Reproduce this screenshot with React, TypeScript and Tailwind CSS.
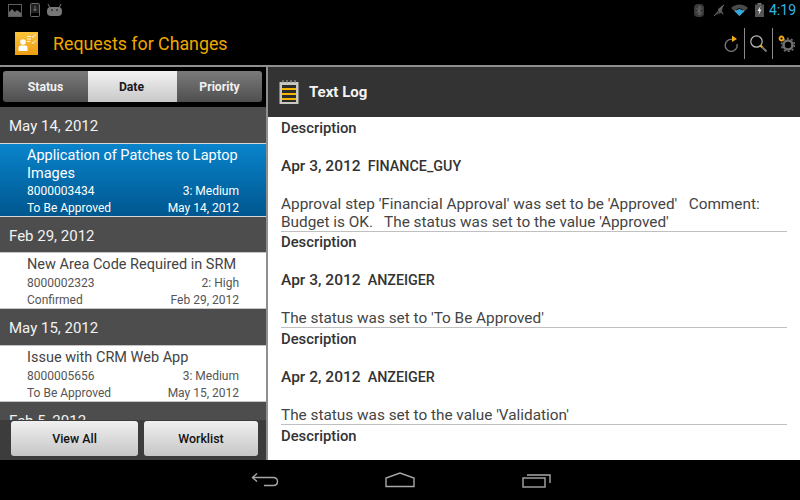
import { ReactNode } from 'react';

const FONT = "font-['Roboto',sans-serif]";

function StatusBar() {
  return (
    <div className="h-[22px] bg-black flex items-center justify-between pl-2 pr-[4px] pb-[2px] shrink-0">
      <div className="flex items-center text-[#555]">
        <svg width="14" height="13" viewBox="0 0 14 13">
          <rect x="0.5" y="0.5" width="13" height="12" fill="none" stroke="#5c5c5c" />
          <path d="M1 11 L1 8 L4 5 L7 8 L9 6 L13 9 L13 12 L1 12 Z" fill="#6a6a6a" />
        </svg>
        <svg width="10" height="14" viewBox="0 0 10 14" className="ml-[8px]">
          <rect x="0.5" y="0.5" width="9" height="13" rx="1" fill="none" stroke="#6a6a6a" />
          <rect x="1" y="1" width="8" height="9" fill="#222" />
          <path d="M5 3 V7 M3.6 6 L5 8 L6.4 6" stroke="#888" strokeWidth="0.8" fill="none" />
        </svg>
        <svg width="15" height="12" viewBox="0 0 15 12" className="ml-[7px]">
          <rect x="0" y="3" width="15" height="9" rx="4" fill="#777" />
          <path d="M3 4 L1 0 M12 4 L14 0" stroke="#777" strokeWidth="1" />
          <circle cx="5" cy="6" r="0.8" fill="#000" />
          <circle cx="10" cy="6" r="0.8" fill="#000" />
        </svg>
      </div>
      <div className="flex items-center">
        <svg width="10" height="13" viewBox="0 0 10 13" className="mr-[9px]">
          <rect x="0" y="0" width="10" height="13" rx="4" fill="#3a3a3a" />
          <path d="M2.5 4 L7.5 9 L5 11 V2 L7.5 4 L2.5 9" fill="none" stroke="#777" strokeWidth="0.8" />
        </svg>
        <svg width="12" height="13" viewBox="0 0 12 13" className="mr-[6px]">
          <path d="M2 11 L6 8 L5 5 L10 1 L9 7 L11 11 L8 9 Z" fill="#555" />
          <path d="M1 12 L11 1" stroke="#777" strokeWidth="1" />
        </svg>
        <svg width="17" height="12" viewBox="0 0 17 12" className="mr-[7px]">
          <path d="M0 4 A12 12 0 0 1 17 4 L8.5 12 Z" fill="#4a4a4a" />
          <path d="M3.5 7 A7 7 0 0 1 13.5 7 L8.5 12 Z" fill="#33a9dc" />
          <path d="M5 6 A5.5 5.5 0 0 1 12 6" stroke="#000" strokeWidth="0.8" fill="none" />
        </svg>
        <svg width="9" height="14" viewBox="0 0 9 14" className="mr-[5px]">
          <rect x="2.5" y="0" width="4" height="2" fill="#777" />
          <rect x="0" y="1.5" width="9" height="12.5" fill="#555" />
          <path d="M5.5 3 L2.5 8 H4.3 L3.5 12 L6.5 6.5 H4.7 Z" fill="#eee" />
        </svg>
        <span className={`text-[14px] leading-none text-[#33b5e5] ${FONT}`}>4:19</span>
      </div>
    </div>
  );
}

function ActionBar() {
  return (
    <div className="h-[43px] bg-black flex items-center pl-[15px] shrink-0">
      <svg width="23" height="23" viewBox="0 0 23 23">
        <defs>
          <linearGradient id="logo" x1="0" y1="0" x2="0" y2="1">
            <stop offset="0" stopColor="#fcc43c" />
            <stop offset="1" stopColor="#ee9c10" />
          </linearGradient>
        </defs>
        <rect width="23" height="23" fill="url(#logo)" />
        <circle cx="8" cy="10" r="2.8" fill="#fff" />
        <path d="M3.5 19 V15.5 Q3.5 13.5 6 13.5 H10 Q12.5 13.5 12.5 15.5 V19 Z" fill="#fff" />
        <path d="M12 4.5 H16 M12 7 H16 M12 9.5 H15" stroke="#fff" strokeWidth="0.9" />
        <path d="M17 4 L18 5.5 L20.5 2.5 M17 10 L18 11.5 L20.5 8.5" stroke="#fff" strokeWidth="0.9" fill="none" />
      </svg>
      <span className={`ml-[15px] pt-[1px] text-[17.8px] leading-none text-[#f0a800] ${FONT}`}>Requests for Changes</span>
      <div className="ml-auto flex items-center">
        <svg width="16" height="18" viewBox="0 0 16 18" className="mr-[5px]">
          <path d="M9.5 4.5 A6 6 0 1 0 14 9" fill="none" stroke="#777" strokeWidth="1.4" />
          <path d="M9 0.5 L14 4 L9 7 Z" fill="#f5ab14" />
        </svg>
        <div className="w-[1px] h-[31px] bg-[#8a8a8a]" />
        <svg width="19" height="19" viewBox="0 0 19 19" className="mx-[4px]">
          <circle cx="7.5" cy="7.5" r="5.7" fill="none" stroke="#bbb" strokeWidth="1.2" />
          <path d="M11.5 11.5 L13.5 13.5" stroke="#f5ab14" strokeWidth="2.2" />
          <path d="M13.5 13.5 L17.5 17.5" stroke="#777" strokeWidth="2.2" />
        </svg>
        <div className="w-[1px] h-[31px] bg-[#8a8a8a]" />
        <svg width="17" height="17" viewBox="0 0 17 17" className="mx-[5px]">
          <circle cx="10" cy="10" r="4.5" fill="none" stroke="#6f6f6f" strokeWidth="2.6" />
          <circle cx="10" cy="10" r="6.5" fill="none" stroke="#6f6f6f" strokeWidth="1.6" strokeDasharray="2 2.1" />
          <circle cx="3.5" cy="3.5" r="2" fill="none" stroke="#f5ab14" strokeWidth="1.8" />
        </svg>
      </div>
    </div>
  );
}

function Tab({ label, active, width }: { label: string; active?: boolean; width: string }) {
  return (
    <div
      className={`${width} flex items-center justify-center pt-[2px] text-[12.2px] font-bold ${
        active
          ? 'bg-linear-to-b from-[#f2f2f2] to-[#c9c9c9] text-[#1a1a1a] pr-[2px]'
          : 'bg-linear-to-b from-[#7b7b7b] to-[#4f4f4f] text-[#f0f0f0]'
      }`}
    >
      {label}
    </div>
  );
}

function DateHeader({ children, tall }: { children: ReactNode; tall?: boolean }) {
  return (
    <div className={`${tall ? 'h-[36px] pt-[2px]' : 'h-[35px] pt-[3px]'} bg-[#4d4d4d] flex items-center pl-[9px] text-[15px] text-[#f2f2f2] shrink-0`}>
      {children}
    </div>
  );
}

interface Req {
  title: string;
  id: string;
  priority: string;
  status: string;
  date: string;
  selected?: boolean;
}

function RequestRow({ title, id, priority, status, date, selected }: Req) {
  return (
    <div
      className={`pl-[27px] pr-[27px] shrink-0 border-y ${
        selected
          ? 'h-[74px] border-[#d8d8d8] bg-linear-to-b from-[#0a84cc] to-[#00578f] text-white pt-[3px]'
          : 'h-[57px] border-[#c4c4c4] bg-white text-[#555] pt-[3px]'
      }`}
    >
      <div className={`text-[14.5px] leading-[18px] ${selected ? 'text-white' : 'text-[#444]'}`}>{title}</div>
      <div className={`flex justify-between text-[12px] leading-[17px] ${selected ? '' : 'mt-[1px]'}`}>
        <span>{id}</span>
        <span>{priority}</span>
      </div>
      <div className="flex justify-between text-[12px] leading-[17px]">
        <span>{status}</span>
        <span>{date}</span>
      </div>
    </div>
  );
}

function LogEntry({ date, user, text, first }: { date: string; user: string; text: ReactNode; first?: boolean }) {
  return (
    <div className={`border-b border-[#c0c0c0] ${first ? '-mb-[1px]' : ''}`}>
      <div className="text-[14.8px] font-medium leading-[20px] text-[#333]">Description</div>
      <div className="font-medium leading-[20px] text-[#333] whitespace-pre mt-[18px]">
        <span className="text-[15.5px]">{date}</span>
        <span className="text-[14.3px]">{'  '}{user}</span>
      </div>
      <div className={`text-[15.35px] text-[#444] whitespace-pre-wrap ${first ? 'mt-[19px] leading-[18px]' : 'mt-[20px] leading-[17px]'}`}>{text}</div>
    </div>
  );
}

function Sidebar() {
  return (
    <div className="w-[266px] shrink-0 flex flex-col relative overflow-hidden">
      <div className="h-[40px] bg-black pt-[4px] pl-[3px] pr-[4px] shrink-0">
        <div className="flex w-full h-[31px] rounded-[3px] overflow-hidden">
          <Tab label="Status" width="w-[85px]" />
          <Tab label="Date" active width="w-[89px]" />
          <Tab label="Priority" width="flex-1" />
        </div>
      </div>
      <DateHeader tall>May 14, 2012</DateHeader>
      <RequestRow
        selected
        title="Application of Patches to Laptop Images"
        id="8000003434"
        priority="3: Medium"
        status="To Be Approved"
        date="May 14, 2012"
      />
      <DateHeader>Feb 29, 2012</DateHeader>
      <RequestRow
        title="New Area Code Required in SRM"
        id="8000002323"
        priority="2: High"
        status="Confirmed"
        date="Feb 29, 2012"
      />
      <DateHeader tall>May 15, 2012</DateHeader>
      <RequestRow
        title="Issue with CRM Web App"
        id="8000005656"
        priority="3: Medium"
        status="To Be Approved"
        date="May 15, 2012"
      />
      <DateHeader>Feb 5, 2012</DateHeader>
      {/* button strip sits on top of the scrolling list */}
      <div className="absolute left-0 right-0 bottom-0 h-[40px] bg-[#3c3c3c] flex items-start gap-[6px] pl-[11px] pr-[8px] pt-[1px]">
        <div className="w-[127px] h-[35px] rounded-[3px] bg-linear-to-b from-[#f0f0f0] to-[#c6c6c6] flex items-center justify-center pt-[1px] text-[12.4px] font-medium text-[#111]">
          View All
        </div>
        <div className="w-[114px] h-[35px] rounded-[3px] bg-linear-to-b from-[#f0f0f0] to-[#c6c6c6] flex items-center justify-center pt-[1px] text-[12.4px] font-medium text-[#111]">
          Worklist
        </div>
      </div>
    </div>
  );
}

function TextLog() {
  return (
    <div className="flex-1 flex flex-col min-w-0 border-l-2 border-[#8f8f8f]">
      <div className="h-[50px] bg-[#333] flex items-center pl-[11px] shrink-0">
        <svg width="20" height="24" viewBox="0 0 20 24">
          <rect x="0.5" y="2" width="19" height="22" fill="#c8c8c0" />
          <rect x="3" y="5" width="14" height="17" fill="#2b2b2b" />
          <path d="M3 9 H17 M3 14 H17 M3 19 H17" stroke="#f5b400" strokeWidth="2.2" />
          <path d="M4 0 V3 M8 0 V3 M12 0 V3 M16 0 V3" stroke="#999" strokeWidth="1.2" />
        </svg>
        <span className="ml-[10px] text-[15px] font-bold text-[#f2f2f2]">Text Log</span>
      </div>
      <div className="flex-1 bg-white pl-[13px] pr-[13px] pt-[1px] overflow-hidden flex flex-col gap-[1px]">
        <LogEntry
          first
          date="Apr 3, 2012"
          user="FINANCE_GUY"
          text={"Approval step 'Financial Approval' was set to be 'Approved'   Comment:\nBudget is OK.   The status was set to the value 'Approved'"}
        />
        <LogEntry date="Apr 3, 2012" user="ANZEIGER" text="The status was set to 'To Be Approved'" />
        <LogEntry date="Apr 2, 2012" user="ANZEIGER" text="The status was set to the value 'Validation'" />
        <div className="text-[14.8px] font-medium leading-[20px] text-[#333]">Description</div>
      </div>
    </div>
  );
}

function NavBar() {
  return (
    <div className="h-[40px] bg-black shrink-0 flex items-center justify-center pl-[2px]">
      <svg width="28" height="16" viewBox="0 0 28 16">
        <path d="M1.5 5.5 H22 Q26.5 5.5 26.5 9.5 Q26.5 13.5 22 13.5 H13" fill="none" stroke="#a8a8a8" strokeWidth="1.4" />
        <path d="M6 1.5 L1.5 5.5 L6 9.5" fill="none" stroke="#a8a8a8" strokeWidth="1.4" />
      </svg>
      <svg width="30" height="16" viewBox="0 0 30 16" className="ml-[106px]">
        <path d="M1 14.5 V6 L15 1 L29 6 V14.5 Z" fill="none" stroke="#a8a8a8" strokeWidth="1.4" />
      </svg>
      <svg width="29" height="15" viewBox="0 0 29 15" className="ml-[107px]">
        <rect x="1" y="5" width="22" height="9" fill="none" stroke="#a8a8a8" strokeWidth="1.4" />
        <path d="M5 2 H28 V10" fill="none" stroke="#a8a8a8" strokeWidth="1.4" />
      </svg>
    </div>
  );
}

export default function App() {
  return (
    <div className={`w-[800px] h-[500px] flex flex-col overflow-hidden bg-black ${FONT}`}>
      <StatusBar />
      <ActionBar />
      <div className="flex-1 flex flex-col min-h-0 border-t-2 border-[#8f8f8f]">
        <div className="flex-1 flex min-h-0">
          <Sidebar />
          <TextLog />
        </div>
      </div>
      <NavBar />
    </div>
  );
}
